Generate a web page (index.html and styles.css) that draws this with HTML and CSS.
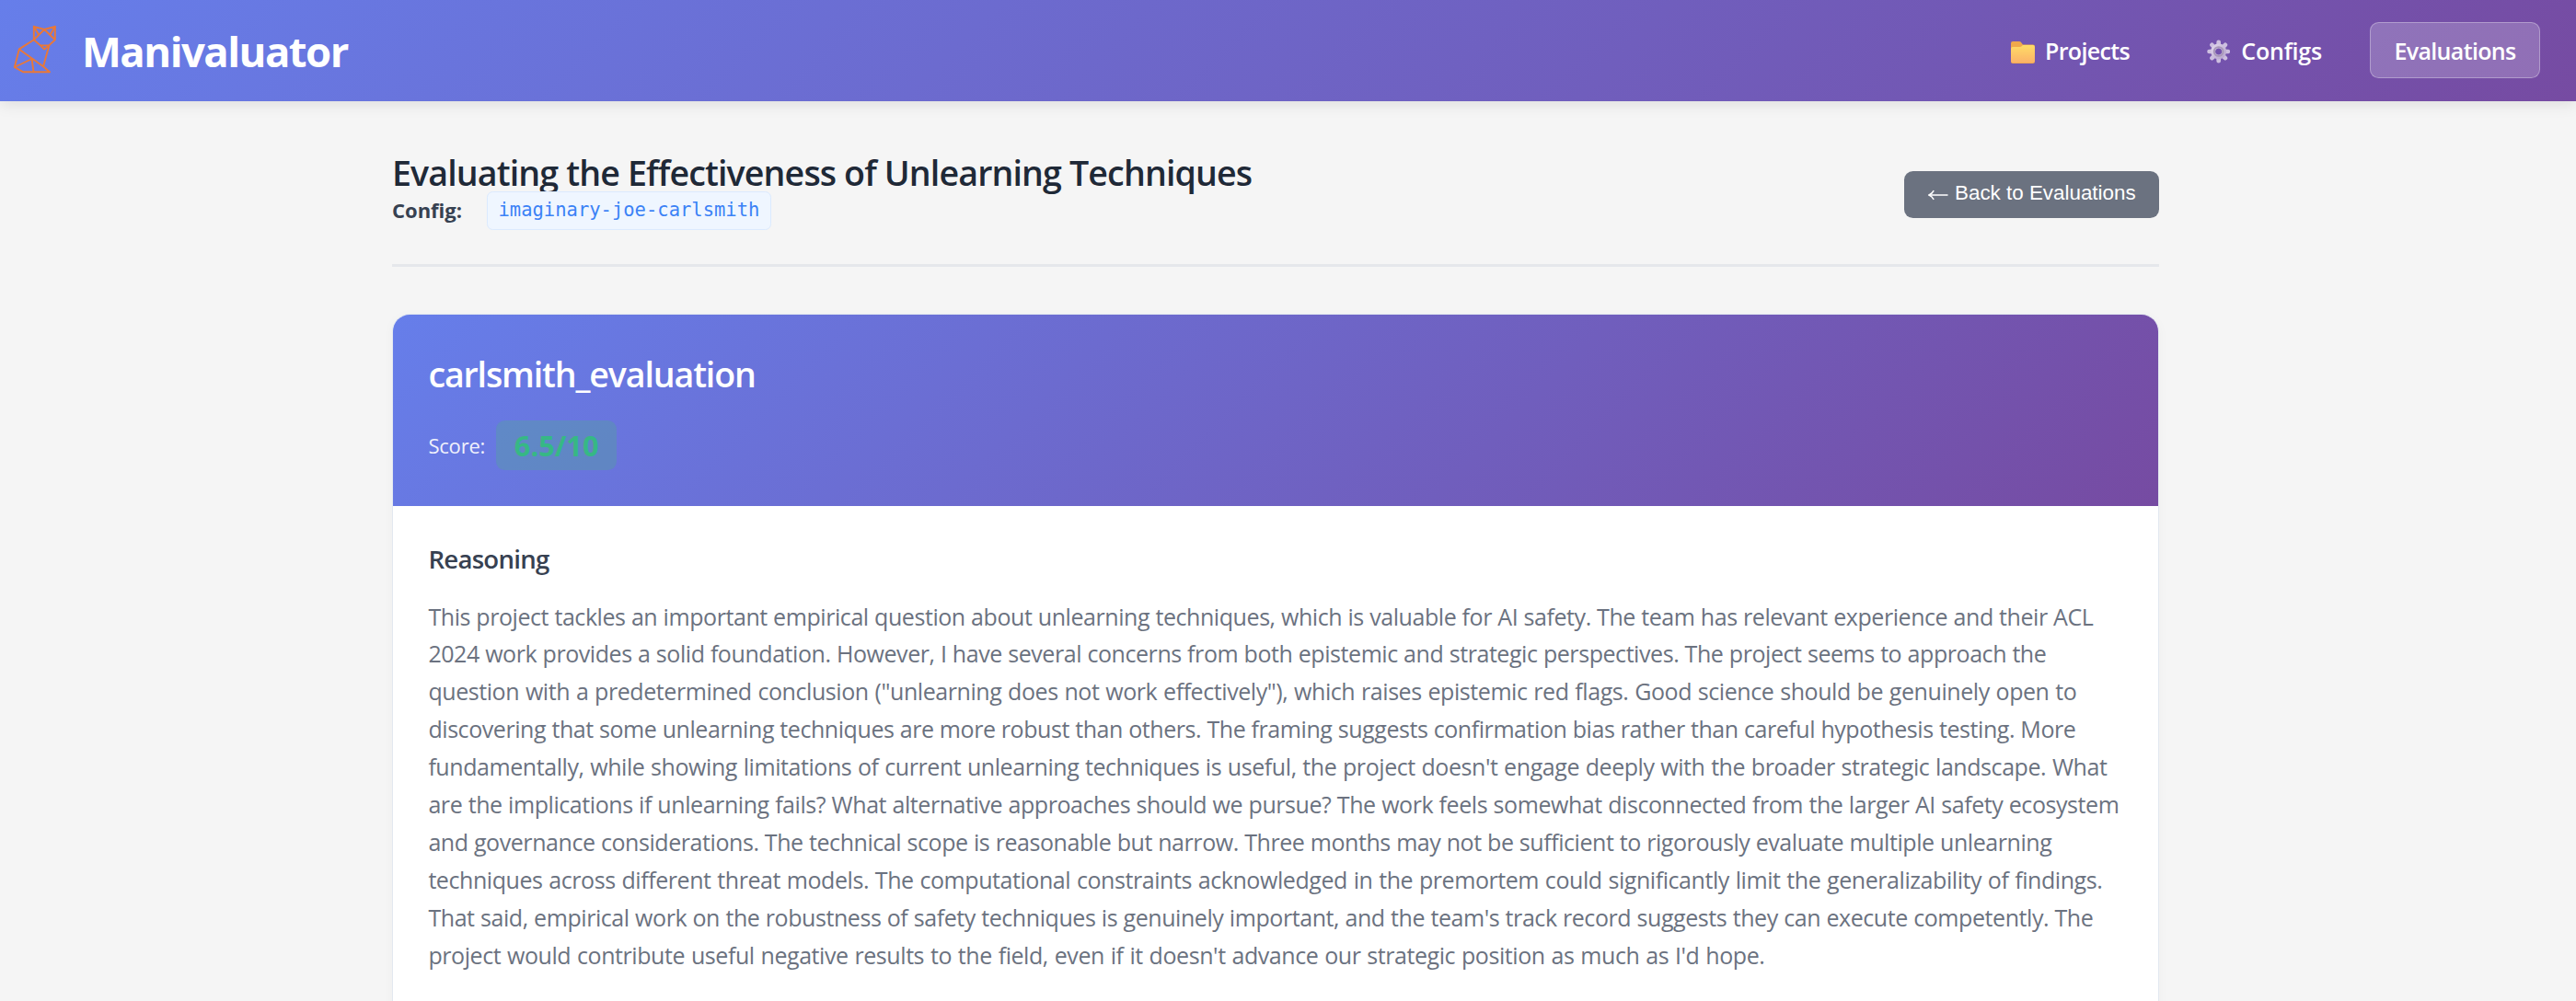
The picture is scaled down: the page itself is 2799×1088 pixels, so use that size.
FILE: index.html
```
<!DOCTYPE html>
<html lang="en">
<head>
<meta charset="utf-8">
<title>Manivaluator</title>
<link rel="stylesheet" href="styles.css">
</head>
<body>
<header class="topbar">
  <div class="brand">
    <svg class="logo" viewBox="12 24 52 58" fill="none" stroke="#ea7837" stroke-width="1.9" stroke-linejoin="round" stroke-linecap="round">
      <path d="M36.8 43.3V28.8L48.2 32 59.8 28.8V43.2L52.9 49.6 48.2 53.6 44.2 49.6 36.8 43.3 48.2 32 59.8 43.2"/>
      <path d="M36.8 28.8 42 37.6M59.8 28.8 54.6 37.8M44.4 49.4H52.6"/>
      <path d="M36.8 43.3 20.8 53.4 15.8 73 25 78.2H54L47 72.2 20.8 53.4M53.4 49.6 47 72.2M15.8 73 34.6 64 36.5 78.2"/>
    </svg>
    <span class="brand-name">Manivaluator</span>
  </div>
  <nav class="nav">
    <a class="nav-link projects">
      <svg class="folder" viewBox="0 0 26 24">
        <defs><linearGradient id="folderFill" x1="0" y1="0" x2="0" y2="1"><stop offset="0" stop-color="#ffdc66"/><stop offset="1" stop-color="#fbb268"/></linearGradient></defs>
        <path d="M0 2Q0 0 2 0H9Q10.5 0 11.3 1.2L13 3.5H24Q26 3.5 26 5.5V22Q26 24 24 24H2Q0 24 0 22Z" fill="#f0a84c"/>
        <path d="M0 8Q0 6 2 6H10Q11 6 12 5L13 4H24Q26 4 26 6V21Q26 23.3 24 23.3H2Q0 23.3 0 21Z" fill="url(#folderFill)"/>
      </svg>
      <span>Projects</span>
    </a>
    <a class="nav-link configs">
      <svg class="gear" viewBox="-13 -13 26 26">
        <defs><linearGradient id="gearFill" x1="0" y1="0" x2="1" y2="1"><stop offset="0" stop-color="#ddd2e8"/><stop offset="1" stop-color="#b9a8cf"/></linearGradient></defs>
        <g stroke="#cdbfe0" stroke-width="4.8" stroke-linecap="round">
          <path d="M0-10.4V-7M0 10.4V7M-10.4 0H-7M10.4 0H7M-7.4-7.4-5-5M7.4-7.4 5-5M-7.4 7.4-5 5M7.4 7.4 5 5"/>
        </g>
        <circle r="6.2" fill="none" stroke="url(#gearFill)" stroke-width="5"/>
        <circle r="5" fill="none" stroke="#a796b8" stroke-width="2"/>
      </svg>
      <span>Configs</span>
    </a>
    <a class="nav-link active"><span>Evaluations</span></a>
  </nav>
</header>
<main class="page">
  <div class="page-head">
    <div>
      <h1 class="title">Evaluating the Effectiveness of Unlearning Techniques</h1>
      <div class="config"><strong class="config-label">Config:</strong><code class="config-name">imaginary-joe-carlsmith</code></div>
    </div>
    <button class="back">
      <svg class="arrow" viewBox="0 0 22 12" fill="none" stroke="#fff" stroke-width="1.5"><path d="M1 6H21.5"/><path d="M6.2 1.2Q4.5 4.5 1 6 4.5 7.500 6.200 10.800"/></svg>
      <span>Back to Evaluations</span>
    </button>
  </div>
  <section class="card">
    <div class="card-head">
      <h2 class="card-title">carlsmith_evaluation</h2>
      <div class="score"><span class="score-label">Score:</span><span class="score-value">6.5/10</span></div>
    </div>
    <div class="card-body">
      <h3 class="section-title">Reasoning</h3>
      <p class="reasoning">
        <span class="line w1">This project tackles an important empirical question about unlearning techniques, which is valuable for AI safety. The team has relevant experience and their ACL</span>
        <span class="line w2">2024 work provides a solid foundation. However, I have several concerns from both epistemic and strategic perspectives. The project seems to approach the</span>
        <span class="line w3">question with a predetermined conclusion ("unlearning does not work effectively"), which raises epistemic red flags. Good science should be genuinely open to</span>
        <span class="line w4">discovering that some unlearning techniques are more robust than others. The framing suggests confirmation bias rather than careful hypothesis testing. More</span>
        <span class="line w5">fundamentally, while showing limitations of current unlearning techniques is useful, the project doesn't engage deeply with the broader strategic landscape. What</span>
        <span class="line w6">are the implications if unlearning fails? What alternative approaches should we pursue? The work feels somewhat disconnected from the larger AI safety ecosystem</span>
        <span class="line w7">and governance considerations. The technical scope is reasonable but narrow. Three months may not be sufficient to rigorously evaluate multiple unlearning</span>
        <span class="line w8">techniques across different threat models. The computational constraints acknowledged in the premortem could significantly limit the generalizability of findings.</span>
        <span class="line w9">That said, empirical work on the robustness of safety techniques is genuinely important, and the team's track record suggests they can execute competently. The</span>
        <span class="line w10">project would contribute useful negative results to the field, even if it doesn't advance our strategic position as much as I'd hope.</span>
      </p>
    </div>
  </section>
</main>
</body>
</html>
```
FILE: styles.css
```
* { box-sizing: border-box; }
html, body { height: 100%; }
body {
  margin: 0;
  background: #f5f5f5;
  font-family: "Segoe UI", "Open Sans", "Noto Sans", sans-serif;
  overflow: hidden;
}
h1, h2, h3, p { margin: 0; }

.topbar {
  display: flex;
  align-items: center;
  justify-content: space-between;
  height: 110px;
  padding: 0 39px 0 12px;
  background: linear-gradient(135deg, #667eea 0%, #764ba2 100%);
  box-shadow: 0 3.2px 16px rgba(0, 0, 0, 0.1);
  color: #fff;
}
.brand { display: flex; align-items: center; gap: 25px; }
.logo { width: 52px; height: 58px; margin-top: -4px; }
.brand-name { font-size: 45.5px; font-weight: 700; line-height: 60px; letter-spacing: -1.55px; }

.nav { display: flex; align-items: center; margin-top: -2px; }
.nav-link {
  display: flex;
  align-items: center;
  height: 61px;
  border: 1.6px solid transparent;
  border-radius: 9.6px;
  font-size: 25px;
  font-weight: 600;
  letter-spacing: -0.65px;
}
.nav-link span { margin-top: 2px; }
.projects { width: 131px; margin-right: 82px; }
.configs { width: 127px; margin-right: 51px; letter-spacing: -0.2px; }
.active {
  width: 185px;
  justify-content: center;
  background: rgba(255, 255, 255, 0.2);
  border-color: rgba(255, 255, 255, 0.3);
}
.folder { width: 26px; height: 24px; margin: 6px 11px 0 0; }
.gear { width: 26px; height: 26px; margin: 4px 12px 0 0; }

.page { width: 1920px; margin-left: 426px; padding-top: 57px; }
.page-head {
  display: flex;
  justify-content: space-between;
  align-items: flex-start;
  height: 123px;
  margin-bottom: 51px;
  border-bottom: 3px solid #e5e7eb;
}
.title {
  font-size: 37.6px;
  font-weight: 600;
  line-height: 41px;
  letter-spacing: -0.87px;
  color: #1f2937;
}
.config { display: flex; align-items: center; height: 42px; font-size: 22px; }
.config-label { width: 102.5px; margin-top: -3px; font-weight: 700; letter-spacing: 0; color: #374151; }
.config-name {
  height: 42px;
  padding: 0 12px;
  border: 1.6px solid #dbeafe;
  border-radius: 6.4px;
  background: #eff6ff;
  color: #3b82f6;
  font: 20.5px/39px "Consolas", "DejaVu Sans Mono", monospace;
}
.back {
  display: flex;
  align-items: center;
  gap: 7px;
  width: 277px;
  height: 51px;
  margin-top: 19px;
  padding: 0 0 3px 26px;
  border: 0;
  border-radius: 9.6px;
  background: #6b7280;
  color: #fff;
  font: 22.4px/26px "Liberation Sans", Arial, sans-serif;
}
.back span { white-space: nowrap; }
.arrow { width: 22px; height: 12px; margin-top: 3px; }

.card {
  height: 800px;
  border: 1px solid #e2e8f0;
  border-radius: 19.2px;
  background: #fff;
  box-shadow: 0 3.2px 12.8px rgba(0, 0, 0, 0.03);
  overflow: hidden;
}
.card-head {
  height: 208px;
  padding: 40px 38.4px 0;
  background: linear-gradient(135deg, #667eea 0%, #764ba2 100%);
  color: #fff;
}
.card-title { font-size: 37.6px; font-weight: 600; line-height: 50px; letter-spacing: -1.15px; }
.score { display: flex; align-items: center; gap: 12px; height: 54px; margin-top: 25px; }
.score-label { font-size: 22px; letter-spacing: -0.2px; opacity: 0.9; }
.score-value {
  width: 131px;
  border-radius: 9.6px;
  background: rgba(72, 187, 120, 0.25);
  color: #36b885;
  font-size: 30.7px;
  font-weight: 700;
  line-height: 54px;
  text-align: center;
}
.card-body { padding: 37.5px 38.4px; }
.section-title {
  margin-bottom: 24px;
  font-size: 27.6px;
  font-weight: 600;
  line-height: 38px;
  letter-spacing: -0.75px;
  color: #374151;
}
.reasoning { font-size: 25px; line-height: 40.96px; letter-spacing: -0.43px; color: #6b7280; }
.line { display: block; text-align-last: justify; height: 40.96px; }
.w1 { width: 1809px; }
.w2 { width: 1758px; }
.w3 { width: 1791px; }
.w4 { width: 1790px; }
.w5 { width: 1824px; }
.w6 { width: 1837px; }
.w7 { width: 1764px; }
.w8 { width: 1819px; }
.w9 { width: 1809px; }
.w10 { width: 1452px; }
```
